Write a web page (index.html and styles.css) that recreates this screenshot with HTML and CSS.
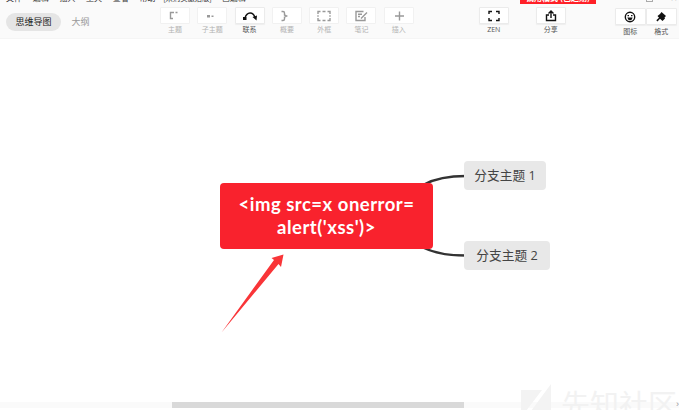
FILE: index.html
```html
<!DOCTYPE html>
<html lang="zh-CN">
<head>
<meta charset="utf-8">
<title>思维导图</title>
<link rel="stylesheet" href="styles.css">
</head>
<body>
<div class="app">
  <header class="header">
    <nav class="menu"><span>文件</span><span>编辑</span><span>插入</span><span>工具</span><span>查看</span><span>帮助</span><span class="doc">[未购买激活版]</span><span class="state">已编辑</span></nav>
    <div class="trial">试用模式 (已过期)</div>
    <div class="window-controls"><i></i><b>×</b></div>
    <div class="toolbar">
      <div class="tabs"><span class="tab active">思维导图</span><span class="tab">大纲</span></div>
      <div class="tools">
        <div class="tool"><button><svg viewBox="0 0 16 16"><path d="M7 4.500H3.500v6H6M8.500 4.500h2"/></svg></button><span>主题</span></div>
        <div class="tool"><button><svg viewBox="0 0 16 16"><path class="solid" d="M3 7h3v2.500H3zM7.500 7.500h2V9h-2z"/></svg></button><span>子主题</span></div>
        <div class="tool enabled"><button><svg viewBox="0 0 16 16"><path d="M3 10C5 3.500 11 3.500 13 9.500"/><path class="solid" d="M1 9h3.500v3H1zM10.500 9l4.500-1.500-.5 5z"/></svg></button><span>联系</span></div>
        <div class="tool"><button><svg viewBox="0 0 16 16"><path d="M2.500 3.500h1.500q1.500 0 1.500 1.500v2L7.500 8l-2 1v2q0 1.500-1.500 1.500H2.500"/></svg></button><span>概要</span></div>
        <div class="tool"><button><svg viewBox="0 0 16 16"><path d="M2 6V3.500h2.500M6.500 3.500h3M11.500 3.500H14V6M14 7.300v1.500M14 10v2.500h-2.500M9.500 12.500h-3M4.500 12.500H2V10M2 8.800V7.300"/></svg></button><span>外框</span></div>
        <div class="tool"><button><svg viewBox="0 0 16 16"><path d="M10.500 3.500H3v9h9V9M5 6.300h4M5 8.500h2M8 10.500l6-6"/></svg></button><span>笔记</span></div>
        <div class="tool"><button><svg viewBox="0 0 16 16"><path d="M8.500 3.500v9M4 8h9"/></svg></button><span>插入</span></div>
      </div>
      <div class="tool enabled zen"><button><svg viewBox="0 0 16 16"><path d="M3 6V3.500h3M10 3.500h3V6M13 10v2.500h-3M6 12.500H3V10"/></svg></button><span>ZEN</span></div>
      <div class="tool enabled share"><button><svg viewBox="0 0 16 16"><path d="M6 7H3.500v5.500h9V7H10M8 10V3.500M5.500 5.500L8 3l2.500 2.500"/></svg></button><span>分享</span></div>
      <div class="panel-tools">
        <div class="tool enabled"><button><svg viewBox="0 0 16 16"><circle cx="8" cy="8" r="4.700"/><path class="solid" d="M5.500 6h1.500v1.300H5.500zM9 6h1.500v1.300H9zM5.300 8.500h5.400q-.7 2.700-2.700 2.700T5.300 8.500"/></svg></button><span>图标</span></div>
        <div class="tool enabled"><button><svg viewBox="0 0 16 16"><path class="solid" d="M8.500 3l4.500 4-1.500 1.500.5 1L9.500 12 7 9.700 4.500 12.500 3.300 11.300 6 8.700 4.500 7 7 5z"/></svg></button><span>格式</span></div>
      </div>
    </div>
  </header>
  <main class="canvas">
    <svg class="lines" viewBox="0 0 679 371"><path class="link" d="M424 145.500Q440 137 466 137M424 209Q440 216.500 466 216.500"/><path class="pointer" d="M221.500 293.500L274 221 271.500 219 283.500 215.500 281 228 278.500 225Z"/></svg>
    <div class="topic root"><span>&lt;img src=x onerror=</span><span>alert('xss')&gt;</span></div>
    <div class="topic branch first">分支主题 1</div>
    <div class="topic branch second">分支主题 2</div>
    <div class="scroll"><div class="thumb"></div><span>›</span></div>
    <div class="watermark"><svg viewBox="0 0 30 27"><path d="M0 6h21L5 27H0zM30 0v27H10z"/></svg><span>先知社区</span></div>
  </main>
</div>
</body>
</html>
```
FILE: styles.css
```css
*{box-sizing:border-box}
body{margin:0;background:#fff;font-family:"Open Sans","Noto Sans CJK SC",sans-serif}
.app{width:679px;height:410px;overflow:hidden}
.header{position:relative;height:39px;background:#fafafa;border-bottom:1px solid #f5f5f5}
.menu{position:absolute;left:6px;top:-8px;display:flex;gap:10.700px;height:12px;font:8px/12px "Noto Sans CJK SC",sans-serif;color:#333}
.menu span{width:16px;white-space:nowrap}
.menu .doc{width:48px;margin-left:-3px;font-size:7.300px}
.menu .state{width:24px}
.trial{position:absolute;left:520px;top:-8px;width:76px;height:12px;background:#ff2027;color:#fff;font:bold 8px/12px "Noto Sans CJK SC",sans-serif;text-align:center}
.window-controls{position:absolute;right:2px;top:-7px;display:flex;gap:18px;color:#888}
.window-controls i{width:7px;height:9px;border:1px solid #aaa}
.window-controls b{font:11px/9px "Open Sans",sans-serif}
.toolbar{display:flex;padding-top:7px;height:38px}
.tabs{display:flex;width:160px;padding:6px 0 0 6px}
.tab{height:18px;width:39px;text-align:center;color:#999;font:9px/18px "Noto Sans CJK SC",sans-serif}
.active{width:55px;border-radius:9px;background:#e5e5e5;color:#222}
.tools{display:flex;gap:7.300px}
.tool{width:30px;flex:none;text-align:center;font:7px/10px "Open Sans","Noto Sans CJK SC",sans-serif;color:#b2b2b2}
.tool button{display:flex;align-items:center;justify-content:center;width:30px;height:17px;border:1px solid #f1f1f1;border-radius:1px;background:#fff;padding:0;color:#999}
.tool>span{display:block;margin-top:1px;white-space:nowrap}
.enabled{color:#555}
.tool.enabled button{color:#111;border-color:#ebebeb;box-shadow:0 1px 1px #eee}
.tool svg{width:16px;height:16px;flex:none;fill:none;stroke:currentColor;stroke-width:1.400}
.tool .solid{fill:currentColor;stroke:none}
.tool.zen{margin-left:65px}
.tool.share{margin-left:27px}
.panel-tools{display:flex;margin-left:49px;padding-top:1px}
.panel-tools .tool,.panel-tools button{width:31px}
.panel-tools .tool>span{margin-top:2px}
.canvas{position:relative;height:371px}
.lines{position:absolute;inset:0;width:679px;height:371px}
.link{fill:none;stroke:#333;stroke-width:2.300}
.pointer{fill:#f93538}
.topic{position:absolute;display:flex;align-items:center;justify-content:center;border-radius:4px}
.root{left:220px;top:144px;width:213px;height:66px;flex-direction:column;background:#f9222d;color:#fff;font:700 18.500px/23.500px Lato,sans-serif;letter-spacing:.5px}
.branch{left:464px;height:29px;background:#e8e8e8;color:#444;font:12.700px/29px "Open Sans","Noto Sans CJK SC",sans-serif;white-space:pre}
.first{top:122px;width:82px}
.second{top:202px;width:86px}
.scroll{position:absolute;left:0;top:363px;width:679px;height:6px;background:#fafafa}
.thumb{width:292px;height:6px;margin-left:172px;background:#d9d9d9}
.scroll span{position:absolute;right:0;top:-1px;font:9px/6px sans-serif;color:#999}
.watermark{position:absolute;left:521px;top:345px;display:flex;height:26px;overflow:hidden;color:#f2f2f2;font:29px/38px "Noto Sans CJK SC",sans-serif}
.watermark svg{width:30px;height:27px;fill:#f3f3f3;flex:none}
.watermark span{margin:0 0 0 10px;white-space:nowrap}
```
